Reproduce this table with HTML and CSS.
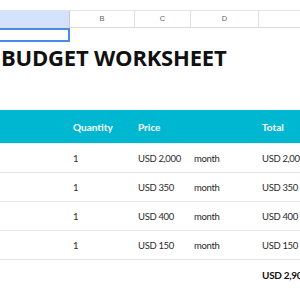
FILE: index.html
```html
<!DOCTYPE html>
<html>
<head>
<meta charset="utf-8">
<link rel="stylesheet" href="styles.css">
</head>
<body>
<div class="sheet">
  <div class="topbar"></div>
  <div class="colheads">
    <div class="ch ch-a"></div>
    <div class="ch">B</div>
    <div class="ch">C</div>
    <div class="ch">D</div>
    <div class="ch ch-e"></div>
  </div>
  <div class="selrow">
    <div class="selcell"></div>
  </div>
  <h1 class="title">BUDGET WORKSHEET</h1>
  <div class="table">
    <div class="row head">
      <div class="c"></div>
      <div class="c">Quantity</div>
      <div class="c">Price</div>
      <div class="c"></div>
      <div class="c">Total</div>
    </div>
    <div class="row">
      <div class="c"></div>
      <div class="c">1</div>
      <div class="c">USD 2,000</div>
      <div class="c">month</div>
      <div class="c">USD 2,000</div>
    </div>
    <div class="row">
      <div class="c"></div>
      <div class="c">1</div>
      <div class="c">USD 350</div>
      <div class="c">month</div>
      <div class="c">USD 350</div>
    </div>
    <div class="row">
      <div class="c"></div>
      <div class="c">1</div>
      <div class="c">USD 400</div>
      <div class="c">month</div>
      <div class="c">USD 400</div>
    </div>
    <div class="row">
      <div class="c"></div>
      <div class="c">1</div>
      <div class="c">USD 150</div>
      <div class="c">month</div>
      <div class="c">USD 150</div>
    </div>
    <div class="row total">
      <div class="c"></div>
      <div class="c"></div>
      <div class="c"></div>
      <div class="c"></div>
      <div class="c">USD 2,900</div>
    </div>
  </div>
</div>
</body>
</html>
```
FILE: styles.css
```css
html, body {
  margin: 0;
  padding: 0;
  background: #ffffff;
}
.sheet {
  width: 300px;
  height: 300px;
  overflow: hidden;
  font-family: Lato, "Open Sans", sans-serif;
}
.topbar {
  height: 10px;
  border-bottom: 1px solid #e3e3e3;
}
.colheads {
  display: grid;
  grid-template-columns: 70px 65px 56px 68px 60px;
  height: 16px;
  border-bottom: 1px solid #dadada;
}
.ch {
  border-right: 1px solid #e0e0e0;
  font-family: "Liberation Sans", Arial, sans-serif;
  font-size: 7.5px;
  color: #5f6368;
  text-align: center;
  line-height: 16px;
  box-sizing: border-box;
}
.ch-a {
  background: #d3e3fd;
  border-right: 1px solid #c8c8c8;
}
.ch-e {
  border-right: none;
}
.selrow {
  height: 14px;
}
.selcell {
  width: 70px;
  height: 14px;
  box-sizing: border-box;
  border: 2px solid #4a8be8;
  border-left: none;
}
.title {
  margin: 0;
  padding: 0 0 0 1px;
  height: 68px;
  box-sizing: border-box;
  font-family: "Open Sans", Lato, sans-serif;
  font-weight: 700;
  font-size: 22px;
  line-height: 30px;
  color: #111111;
  letter-spacing: -0.2px;
}
.table {
  display: flex;
  flex-direction: column;
}
.row {
  display: grid;
  grid-template-columns: 73px 65px 56px 68px 60px;
  height: 29px;
  box-sizing: border-box;
  border-bottom: 1px solid #e6e6e6;
  align-items: center;
  font-size: 9.5px;
  letter-spacing: -0.35px;
  color: #2b2b2b;
}
.row .c {
  white-space: nowrap;
}
.row.head {
  height: 34px;
  background: #00b7d2;
  color: #ffffff;
  font-weight: 700;
  font-size: 10px;
  letter-spacing: 0;
  border-bottom: 1px solid #e8f6f9;
}
.row.total {
  border-bottom: none;
  font-weight: 700;
  font-size: 10px;
  letter-spacing: -0.3px;
  color: #111111;
}
```
